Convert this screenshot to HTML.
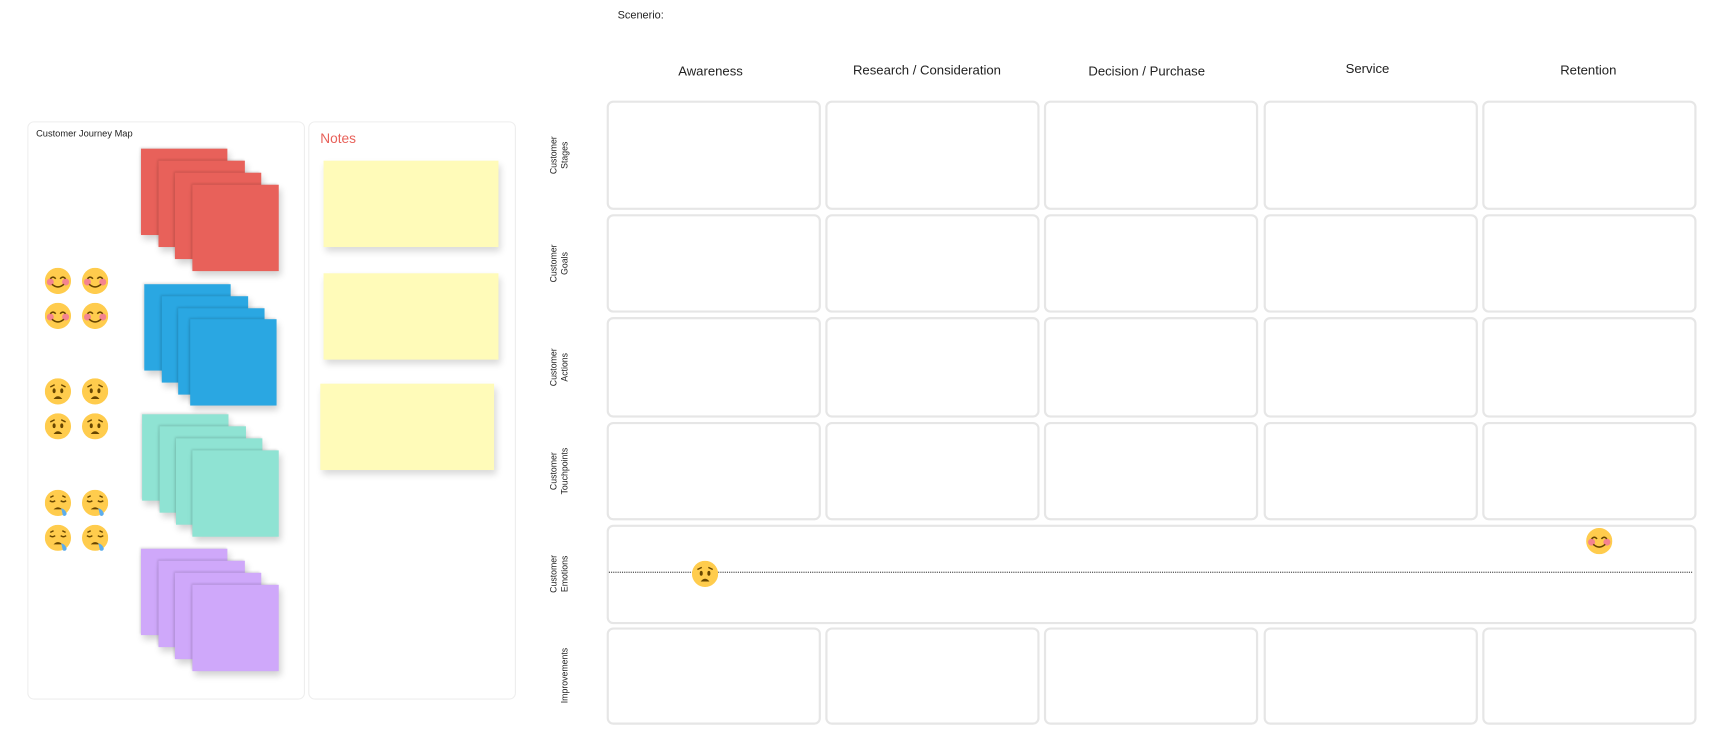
<!DOCTYPE html>
<html><head><meta charset="utf-8"><style>
html,body{margin:0;padding:0;background:#fff;width:1714px;height:749px;overflow:hidden}
#w{position:absolute;left:0;top:0;width:1568px;height:685px;transform:scale(1.09311);transform-origin:0 0;font-family:"Liberation Sans",sans-serif;color:#222}
.a{position:absolute}
.cell{position:absolute;border:2px solid #e6e6e6;border-radius:6px;box-sizing:border-box;background:#fff}
.h{position:absolute;font-size:12px;transform:translateX(-50%);white-space:nowrap;color:#222}
.st{position:absolute;width:79px;height:79px;box-shadow:-1px -1px 2px rgba(0,0,0,.12),2px 4px 6px rgba(0,0,0,.18)}
.y{position:absolute;background:#fffbb9;box-shadow:2px 4px 6px rgba(0,0,0,.15)}
.v{position:absolute;font-size:8px;line-height:10px;text-align:center;transform:translate(-50%,-50%) rotate(-90deg);white-space:nowrap;color:#222}
.e{position:absolute;width:24px;height:24px}
</style></head><body><div id="w">
<svg width="0" height="0" style="position:absolute"><defs>
<g id="hap"><circle cx="12" cy="12" r="12" fill="#FFCC4D"/><circle cx="5" cy="13" r="3.2" fill="#F4838F"/><circle cx="19" cy="13" r="3.2" fill="#F4838F"/><path d="M5 10q2.5-3 5 0M14 10q2.5-3 5 0" stroke="#664500" stroke-width="1.4" fill="none"/><path d="M6.5 15q5.5 5 11 0" stroke="#664500" stroke-width="1.4" fill="none"/></g>
<g id="wor"><circle cx="12" cy="12" r="12" fill="#FFCC4D"/><path d="M5 8l4-2M19 8l-4-2" stroke="#664500" stroke-width="1.3" fill="none"/><ellipse cx="8.5" cy="11.5" rx="1.4" ry="2.2" fill="#664500"/><ellipse cx="15.5" cy="11.5" rx="1.4" ry="2.2" fill="#664500"/><path d="M8 19q4-5 8 0z" fill="#664500"/></g>
<g id="sad"><circle cx="12" cy="12" r="12" fill="#FFCC4D"/><path d="M4.5 10q2.5 2 5 0M14.5 10q2.5 2 5 0M5 7l3-1.5M19 7l-3-1.5" stroke="#664500" stroke-width="1.3" fill="none"/><path d="M8 18q4-4 8 0z" fill="#664500"/><path d="M15 17q4 1 5 5q-1 3-3.5 1.5z" fill="#5DADEC"/></g>
</defs></svg>

<div class="a" style="left:565px;top:9px;font-size:10px">Scenerio:</div>
<div class="h" style="left:650px;top:58px">Awareness</div>
<div class="h" style="left:848px;top:57px">Research / Consideration</div>
<div class="h" style="left:1049px;top:58px">Decision / Purchase</div>
<div class="h" style="left:1251px;top:56px">Service</div>
<div class="h" style="left:1453px;top:57px">Retention</div>

<div class="cell" style="left:555px;top:480px;width:997px;height:91px"></div>
<div class="a" style="left:557px;top:523px;width:991px;border-top:1.5px dotted #333"></div>
<svg class="e" style="left:633px;top:513px"><use href="#wor"/></svg>
<svg class="e" style="left:1451px;top:483px"><use href="#hap"/></svg>

<div class="v" style="left:512px;top:142px">Customer<br>Stages</div>
<div class="v" style="left:512px;top:241px">Customer<br>Goals</div>
<div class="v" style="left:512px;top:336px">Customer<br>Actions</div>
<div class="v" style="left:512px;top:431px">Customer<br>Touchpoints</div>
<div class="v" style="left:512px;top:525px">Customer<br>Emotions</div>
<div class="v" style="left:517px;top:618px">Improvements</div>

<div class="a" style="left:25px;top:111px;width:254px;height:529px;border:1px solid #eee;border-radius:6px;box-sizing:border-box"></div>
<div class="a" style="left:282px;top:111px;width:190px;height:529px;border:1px solid #eee;border-radius:6px;box-sizing:border-box"></div>
<div class="a" style="left:33px;top:117px;font-size:8.5px">Customer Journey Map</div>
<div class="a" style="left:293px;top:120px;font-size:12.5px;color:#e8615a">Notes</div>

<div class="st" style="left:129px;top:136px;background:#e8615a"></div>
<div class="st" style="left:145px;top:147px;background:#e8615a"></div>
<div class="st" style="left:160px;top:158px;background:#e8615a"></div>
<div class="st" style="left:176px;top:169px;background:#e8615a"></div>
<div class="st" style="left:132px;top:260px;background:#2aa7e2"></div>
<div class="st" style="left:148px;top:271px;background:#2aa7e2"></div>
<div class="st" style="left:163px;top:282px;background:#2aa7e2"></div>
<div class="st" style="left:174px;top:292px;background:#2aa7e2"></div>
<div class="st" style="left:130px;top:379px;background:#8fe3d3"></div>
<div class="st" style="left:146px;top:390px;background:#8fe3d3"></div>
<div class="st" style="left:161px;top:401px;background:#8fe3d3"></div>
<div class="st" style="left:176px;top:412px;background:#8fe3d3"></div>
<div class="st" style="left:129px;top:502px;background:#cfa8fa"></div>
<div class="st" style="left:145px;top:513px;background:#cfa8fa"></div>
<div class="st" style="left:160px;top:524px;background:#cfa8fa"></div>
<div class="st" style="left:176px;top:535px;background:#cfa8fa"></div>

<div class="y" style="left:296px;top:147px;width:160px;height:79px"></div>
<div class="y" style="left:296px;top:250px;width:160px;height:79px"></div>
<div class="y" style="left:293px;top:351px;width:159px;height:79px"></div>

<svg class="e" style="left:41px;top:245px"><use href="#hap"/></svg>
<svg class="e" style="left:75px;top:245px"><use href="#hap"/></svg>
<svg class="e" style="left:41px;top:277px"><use href="#hap"/></svg>
<svg class="e" style="left:75px;top:277px"><use href="#hap"/></svg>
<svg class="e" style="left:41px;top:346px"><use href="#wor"/></svg>
<svg class="e" style="left:75px;top:346px"><use href="#wor"/></svg>
<svg class="e" style="left:41px;top:378px"><use href="#wor"/></svg>
<svg class="e" style="left:75px;top:378px"><use href="#wor"/></svg>
<svg class="e" style="left:41px;top:448px"><use href="#sad"/></svg>
<svg class="e" style="left:75px;top:448px"><use href="#sad"/></svg>
<svg class="e" style="left:41px;top:480px"><use href="#sad"/></svg>
<svg class="e" style="left:75px;top:480px"><use href="#sad"/></svg>

<div class="cell" style="left:555px;top:92px;width:196px;height:100px"></div><div class="cell" style="left:755px;top:92px;width:196px;height:100px"></div><div class="cell" style="left:955px;top:92px;width:196px;height:100px"></div><div class="cell" style="left:1156px;top:92px;width:196px;height:100px"></div><div class="cell" style="left:1356px;top:92px;width:196px;height:100px"></div>
<div class="cell" style="left:555px;top:196px;width:196px;height:90px"></div><div class="cell" style="left:755px;top:196px;width:196px;height:90px"></div><div class="cell" style="left:955px;top:196px;width:196px;height:90px"></div><div class="cell" style="left:1156px;top:196px;width:196px;height:90px"></div><div class="cell" style="left:1356px;top:196px;width:196px;height:90px"></div>
<div class="cell" style="left:555px;top:290px;width:196px;height:92px"></div><div class="cell" style="left:755px;top:290px;width:196px;height:92px"></div><div class="cell" style="left:955px;top:290px;width:196px;height:92px"></div><div class="cell" style="left:1156px;top:290px;width:196px;height:92px"></div><div class="cell" style="left:1356px;top:290px;width:196px;height:92px"></div>
<div class="cell" style="left:555px;top:386px;width:196px;height:90px"></div><div class="cell" style="left:755px;top:386px;width:196px;height:90px"></div><div class="cell" style="left:955px;top:386px;width:196px;height:90px"></div><div class="cell" style="left:1156px;top:386px;width:196px;height:90px"></div><div class="cell" style="left:1356px;top:386px;width:196px;height:90px"></div>
<div class="cell" style="left:555px;top:574px;width:196px;height:89px"></div><div class="cell" style="left:755px;top:574px;width:196px;height:89px"></div><div class="cell" style="left:955px;top:574px;width:196px;height:89px"></div><div class="cell" style="left:1156px;top:574px;width:196px;height:89px"></div><div class="cell" style="left:1356px;top:574px;width:196px;height:89px"></div>
</div></body></html>
